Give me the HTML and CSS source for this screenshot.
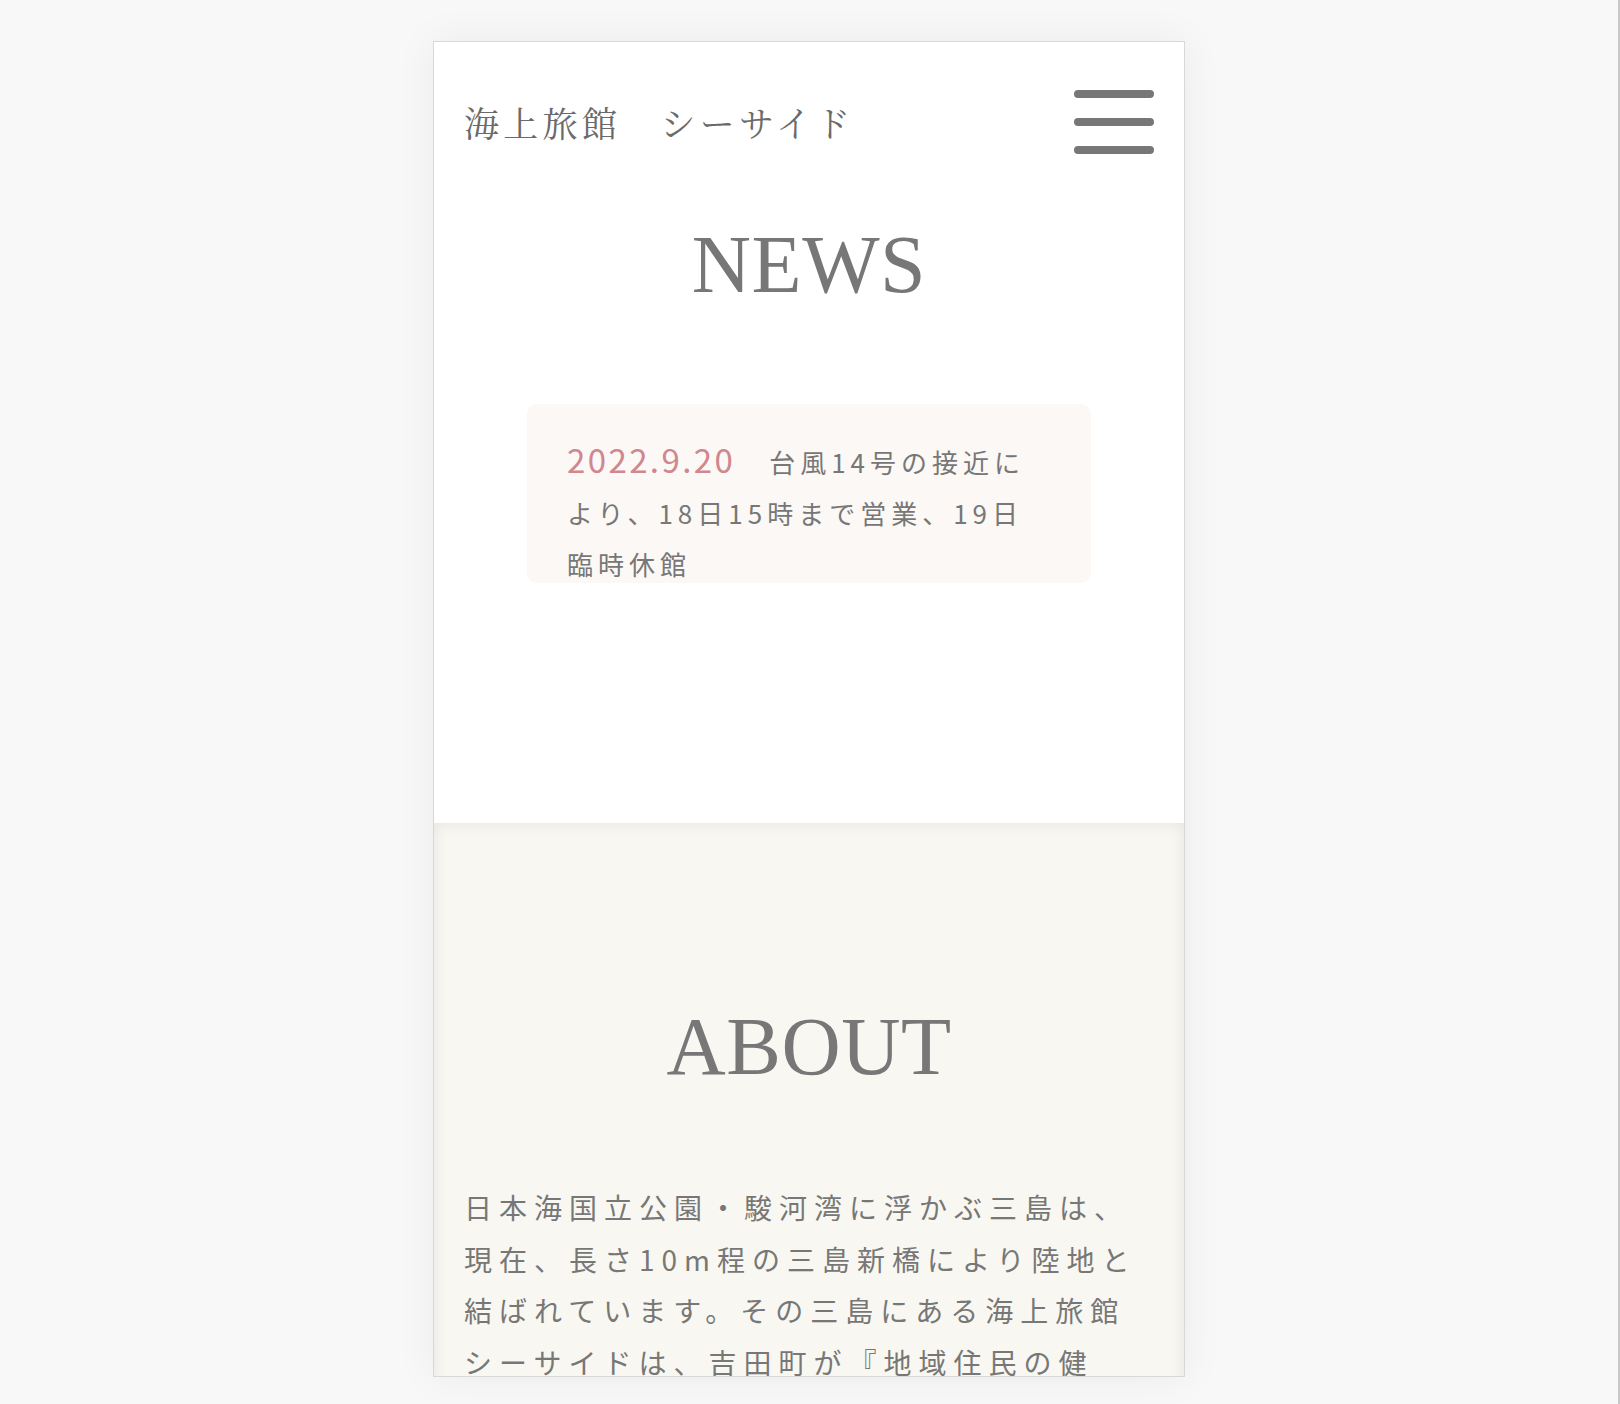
FILE: index.html
```html
<!DOCTYPE html>
<html lang="ja">
<head>
<meta charset="utf-8">
<title>海上旅館　シーサイド</title>
<link rel="stylesheet" href="styles.css">
</head>
<body>
<div class="stage">
  <div class="phone">
    <section class="news">
      <header class="site-header">
        <div class="site-title">海上旅館　シーサイド</div>
        <button class="menu-btn" aria-label="メニュー">
          <span class="bar"></span>
          <span class="bar"></span>
          <span class="bar"></span>
        </button>
      </header>
      <h2 class="section-title">NEWS</h2>
      <div class="news-box">
        <p class="news-text"><span class="news-date">2022.9.20</span>台風14号の接近により、18日15時まで営業、19日臨時休館</p>
      </div>
    </section>
    <section class="about">
      <h2 class="section-title">ABOUT</h2>
      <p class="about-text">日本海国立公園・駿河湾に浮かぶ三島は、<br>現在、長さ10m程の三島新橋により陸地と<br>結ばれています。その三島にある海上旅館<br>シーサイドは、吉田町が『地域住民の健<br>康づくりの場』として運営しています。</p>
    </section>
  </div>
</div>
</body>
</html>
```

FILE: styles.css
```css
html, body {
  margin: 0;
  padding: 0;
  background: #f8f8f8;
}

.stage {
  box-sizing: border-box;
  min-height: 1404px;
  padding-top: 41px;
  border-right: 2px solid #c8c8c8;
}

.phone {
  box-sizing: border-box;
  width: 752px;
  height: 1336px;
  margin: 0 auto;
  border: 1px solid #d8d8d8;
  background: #ffffff;
  overflow: hidden;
  box-shadow: 0 0 40px rgba(0, 0, 0, 0.06);
  color: #777777;
  font-family: "Noto Sans CJK JP", "Noto Sans", sans-serif;
}

.news {
  background: #ffffff;
  padding-bottom: 240px;
}

.site-header {
  display: flex;
  align-items: center;
  justify-content: space-between;
  padding: 48px 30px 0 30px;
}

.site-title {
  font-family: "Noto Serif CJK JP", "Noto Serif JP", "Liberation Serif", "Noto Sans CJK JP", serif;
  font-size: 35px;
  letter-spacing: 4.3px;
  color: #6a6a6a;
  line-height: 1;
}

.menu-btn {
  display: flex;
  flex-direction: column;
  gap: 20px;
  padding: 0;
  margin: 0;
  border: 0;
  background: transparent;
}

.bar {
  display: block;
  width: 80px;
  height: 8px;
  border-radius: 4px;
  background: #777777;
}

.section-title {
  margin: 70px 0 0;
  font-family: "Liberation Serif", "DejaVu Serif", serif;
  font-weight: normal;
  font-size: 82px;
  line-height: 82px;
  letter-spacing: 0.5px;
  text-align: center;
  color: #777777;
}

.news-box {
  box-sizing: border-box;
  width: 564px;
  height: 179px;
  margin: 98px auto 0;
  padding: 32px 40px 0;
  border-radius: 10px;
  background: #fcf8f5;
  overflow: hidden;
}

.news-text {
  margin: 0;
  font-size: 26px;
  line-height: 51px;
  letter-spacing: 5px;
  color: #777777;
}

.news-date {
  font-size: 33px;
  line-height: 1;
  letter-spacing: 2.4px;
  color: #d0878f;
  margin-right: 34px;
}

.about {
  background: #f9f7f1;
  box-shadow: inset 0 0 16px rgba(0, 0, 0, 0.08);
  padding: 113px 30px 80px 30px;
}

.about .section-title {
  margin-top: 70px;
}

.about-text {
  margin: 94px 0 0;
  font-size: 28px;
  line-height: 51.6px;
  letter-spacing: 7px;
  color: #777777;
  white-space: nowrap;
}
```
